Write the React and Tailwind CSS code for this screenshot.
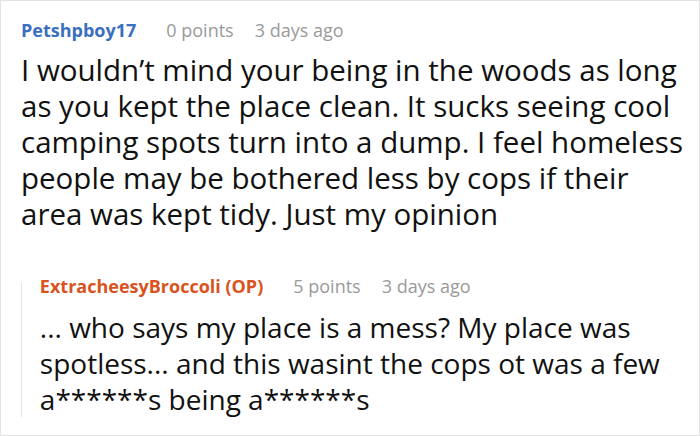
export default function App() {
  return (
    <div className="w-[700px] h-[436px] bg-white border border-[#e3e3e3] overflow-hidden" style={{ fontFamily: '"Open Sans", "Noto Sans", sans-serif' }}>
      <div className="pl-[20px] pr-4 pt-[17px]">
        <div className="flex items-center text-[18px] leading-[24px]">
          <span className="font-bold text-[#3a6fc0]">Petshpboy17</span>
          <span className="ml-[30px] text-[#9a9a9a]">0 points</span>
          <span className="ml-[21px] text-[#9a9a9a]">3 days ago</span>
        </div>
        <p className="mt-[10px] text-[29.5px] leading-[36px] text-[#111]">
          I wouldn’t mind your being in the woods as long as you kept the place clean. It sucks seeing cool camping spots turn into a dump. I feel homeless people may be bothered less by cops if their area was kept tidy. Just my opinion
        </p>
        <div className="mt-[42px] flex">
          <div className="w-[2px] mt-[9px] bg-[#e4e4e4]" />
          <div className="pl-[18px]">
            <div className="flex items-center text-[18px] leading-[24px]">
              <span className="font-bold text-[#d9531e]">ExtracheesyBroccoli (OP)</span>
              <span className="ml-[30px] text-[#9a9a9a]">5 points</span>
              <span className="ml-[21px] text-[#9a9a9a]">3 days ago</span>
            </div>
            <p className="mt-[11px] text-[28px] leading-[36px] text-[#111]">
              ... who says my place is a mess? My place was spotless... and this wasint the cops ot was a few a******s being a******s
            </p>
          </div>
        </div>
      </div>
    </div>
  );
}
